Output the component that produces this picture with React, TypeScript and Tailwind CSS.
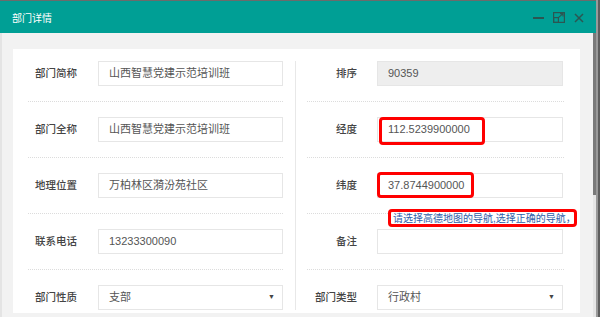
import React from "react";

const font = "font-['Liberation_Sans','Noto_Sans_CJK_SC',sans-serif]";

type Field = {
  label: string;
  value?: string;
  kind?: "input" | "readonly" | "select";
  mark?: string;
};

const leftFields: Field[] = [
  { label: "部门简称", value: "山西智慧党建示范培训班" },
  { label: "部门全称", value: "山西智慧党建示范培训班" },
  { label: "地理位置", value: "万柏林区漪汾苑社区" },
  { label: "联系电话", value: "13233300090" },
  { label: "部门性质", value: "支部", kind: "select" },
];

const rightFields: Field[] = [
  { label: "排序", value: "90359", kind: "readonly" },
  { label: "经度", value: "112.5239900000", mark: "lng" },
  { label: "纬度", value: "37.8744900000", mark: "lat" },
  { label: "备注", value: "" },
  { label: "部门类型", value: "行政村", kind: "select" },
];

const Box: React.FC<{ field: Field; width: string }> = ({ field, width }) => (
  <div
    className={`relative h-[25px] ${width} border border-[#e6e6e6] flex items-center justify-between pl-[10px] pr-[7px] text-[11px] text-[#555] ${
      field.kind === "readonly" ? "bg-[#eeeeee]" : "bg-white"
    }`}
  >
    <span className="whitespace-nowrap">{field.value}</span>
    {field.kind === "select" && <span className="text-[7px] text-[#444]">▼</span>}
    {field.mark === "lng" && (
      <div className="absolute -top-[1px] left-[1px] w-[106px] h-[28px] border-[3px] border-[#ff0000] rounded-[4px]" />
    )}
    {field.mark === "lat" && (
      <div className="absolute -top-[2px] -left-[1px] w-[97px] h-[26px] border-[3px] border-[#ff0000] rounded-[4px]" />
    )}
  </div>
);

const Column: React.FC<{
  fields: Field[];
  labelW: string;
  gap: string;
  inputW: string;
  sep: string;
  children?: React.ReactNode;
}> = ({ fields, labelW, gap, inputW, sep, children }) => (
  <div className="relative flex flex-col">
    {fields.map((f, i) => (
      <React.Fragment key={f.label}>
        {i > 0 && <div className={`my-[15px] border-t border-dotted border-[#dcdcdc] ${sep}`} />}
        <div className="flex items-center">
          <div className={`${labelW} text-right text-[10.5px] font-medium text-[#444]`}>{f.label}</div>
          <div className={gap}>
            <Box field={f} width={inputW} />
          </div>
        </div>
      </React.Fragment>
    ))}
    {children}
  </div>
);

export default function App() {
  return (
    <div className={`w-[600px] h-[317px] overflow-hidden flex bg-[#f2f2f2] ${font}`}>
      <div className="flex-1 flex flex-col border-t border-[#6b6b6b]">
        <div className="h-[32px] shrink-0 bg-[#009f95] flex items-center justify-between pl-[12px] pr-[12px]">
          <span className="text-white text-[10px] mt-[2px]">部门详情</span>
          <div className="flex items-center gap-[9px] mt-[1px] text-[#2b5652]">
            <div className="w-[11px] h-[2px] bg-[#2b5652]" />
            <svg width="12" height="11" viewBox="0 0 12 11" fill="none" stroke="currentColor" strokeWidth="1.2">
              <rect x="0.6" y="0.6" width="10.8" height="9.8" />
              <rect x="0.6" y="5.6" width="4.8" height="4.8" />
              <path d="M5.4 5.6 L10 1.6 M7 1.6 H10 V4.6" />
            </svg>
            <svg width="10" height="10" viewBox="0 0 10 10" stroke="currentColor" strokeWidth="1.5">
              <path d="M1 1 L9 9 M9 1 L1 9" />
            </svg>
          </div>
        </div>
        <div className="flex-1 flex min-h-0">
          <div className="flex-1 pt-[16px] pl-[13px] pr-[13px] border-l-2 border-[#e4e4e4]">
            <div className="bg-white grid grid-cols-[282px_1fr] pt-[12px] pb-[3px] -ml-[2px]">
              <Column fields={leftFields} labelW="w-[64px]" gap="ml-[21px]" inputW="w-[185px]" sep="ml-[15px] mr-[12px]" />
              <div className="border-l border-[#e8e8e8]">
                <Column fields={rightFields} labelW="w-[61px]" gap="ml-[20px]" inputW="w-[186px]" sep="ml-[11px] mr-[16px]">
                  <div className="absolute left-[92px] top-[148px] w-[189px] h-[18px] border-[3px] border-[#ff0000] rounded-[4px] bg-white overflow-hidden flex items-center pl-[2px]">
                    <span className="whitespace-nowrap text-[10px] text-[#2f5ea8]">
                      请选择高德地图的导航,选择正确的导航，中
                    </span>
                  </div>
                </Column>
              </div>
            </div>
          </div>
          <div className="w-[3px] flex flex-col bg-[#e6e6e6]">
            <div className="h-[162px] bg-[#7a7a7a]" />
          </div>
        </div>
      </div>
      <div className="w-[4px] bg-[#9a9a9a] border-r-2 border-[#5e5e5e]" />
    </div>
  );
}
